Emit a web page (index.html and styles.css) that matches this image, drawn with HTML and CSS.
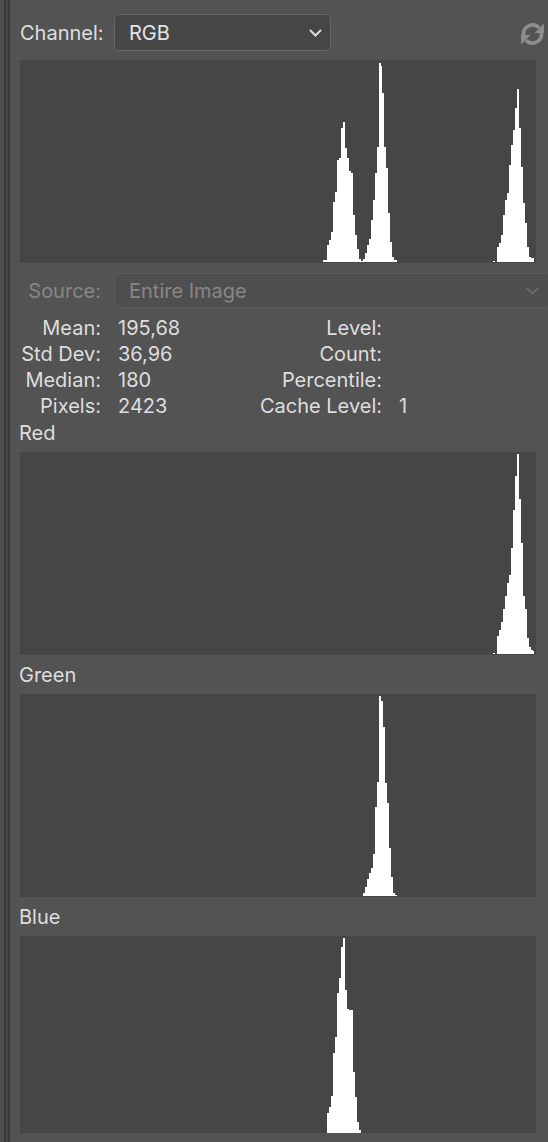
FILE: index.html
```html
<!DOCTYPE html>
<html lang="en">
<head>
<meta charset="utf-8">
<title>Histogram</title>
<link rel="stylesheet" href="styles.css">
</head>
<body>
<div class="panel">
  <div class="edge"></div>
  <main class="content">
    <div class="row channel-row">
      <span class="label">Channel:</span>
      <div class="select">
        <span>RGB</span>
        <svg class="chev" width="13" height="8" viewBox="0 0 13 8"><polyline points="1,1 6.5,6.5 12,1" fill="none" stroke="#dcdcdc" stroke-width="2"/></svg>
      </div>
      <svg class="refresh" width="25" height="24" viewBox="0 0 25 24">
        <path d="M3.6 13.2 A9 9 0 0 1 19 5.8" fill="none" stroke="#8d8d8d" stroke-width="3.6"/>
        <polygon points="24,1.5 24,11 14.5,11" fill="#8d8d8d"/>
        <path d="M21.4 10.8 A9 9 0 0 1 6 18.2" fill="none" stroke="#8d8d8d" stroke-width="3.6"/>
        <polygon points="1,22.5 1,13 10.5,13" fill="#8d8d8d"/>
      </svg>
    </div>

    <div class="hist">
      <svg width="516" height="203" viewBox="20 60 516 203" shape-rendering="crispEdges">
        <polygon fill="#fff" points="322.7,261.7 322.7,260 326.7,260 326.7,245 328.7,245 328.7,240 330.7,240 330.7,232 333.3,232 333.3,202 334.7,202 334.7,192 336.7,192 336.7,160 338.7,160 338.7,158 340.7,158 340.7,128 342.7,128 342.7,122 344.7,122 344.7,148 346.7,148 346.7,158 348.7,158 348.7,171 350.7,171 350.7,173 352.7,173 352.7,215 354.7,215 354.7,235 356.7,235 356.7,249 358.7,249 358.7,259 360.7,259 360.7,261 362.7,261 362.7,259 364.7,259 364.7,253 366.7,253 366.7,245 368.7,245 368.7,239 370.7,239 370.7,220 372.7,220 372.7,200 374.7,200 374.7,173 376.7,173 376.7,147 378.7,147 378.7,63 380.7,63 380.7,66 382,66 382,93 384,93 384,147 386,147 386,168 388,168 388,213 390,213 390,242 392,242 392,257 394,257 394,260 396.7,260 396.7,261.7"/>
        <rect x="492.7" y="260.5" width="2.3" height="1.2" fill="#fff"/>
        <polygon fill="#fff" points="496.7,261.7 496.7,247 498.7,247 498.7,243 500.7,243 500.7,235 502.7,235 502.7,215 504.7,215 504.7,200 506.7,200 506.7,193 508.7,193 508.7,165 510.7,165 510.7,145 512.7,145 512.7,130 514.7,130 514.7,108 516.7,108 516.7,89 518.7,89 518.7,128 520.7,128 520.7,167 522.7,167 522.7,203 524.7,203 524.7,223 526.7,223 526.7,247 528.7,247 528.7,257 530.7,257 530.7,258 534,258 534,261.7"/>
      </svg>
    </div>

    <div class="row source-row">
      <span class="label disabled">Source:</span>
      <div class="select select-disabled">
        <span>Entire Image</span>
        <svg class="chev" width="13" height="8" viewBox="0 0 13 8"><polyline points="1,1 6.5,6.5 12,1" fill="none" stroke="#6e6e6e" stroke-width="1.6"/></svg>
      </div>
    </div>

    <div class="stats">
      <span class="k">Mean:</span><span class="v">195,68</span><span class="k">Level:</span><span class="v"></span>
      <span class="k">Std Dev:</span><span class="v">36,96</span><span class="k">Count:</span><span class="v"></span>
      <span class="k">Median:</span><span class="v">180</span><span class="k">Percentile:</span><span class="v"></span>
      <span class="k">Pixels:</span><span class="v">2423</span><span class="k">Cache Level:</span><span class="v">1</span>
    </div>

    <section class="channel channel-first">
      <div class="channel-label">Red</div>
      <div class="hist">
        <svg width="516" height="203" viewBox="20 452 516 203" shape-rendering="crispEdges">
          <rect x="492.7" y="652.5" width="2.3" height="1.2" fill="#fff"/>
          <polygon fill="#fff" points="496.7,653.7 496.7,636 498.7,636 498.7,630 500.7,630 500.7,622 502.7,622 502.7,609 504.7,609 504.7,596 506.7,596 506.7,583 508.7,583 508.7,575 510.7,575 510.7,548 512.7,548 512.7,510 514.7,510 514.7,476 516.7,476 516.7,454 518.7,454 518.7,499 520.7,499 520.7,543 522.7,543 522.7,596 524.7,596 524.7,609 526.7,609 526.7,638 528.7,638 528.7,647 530.7,647 530.7,650 532.7,650 532.7,651 534,651 534,653.7"/>
        </svg>
      </div>
    </section>

    <section class="channel">
      <div class="channel-label">Green</div>
      <div class="hist">
        <svg width="516" height="203" viewBox="20 694 516 203" shape-rendering="crispEdges">
          <polygon fill="#fff" points="362.7,896 362.7,893 364.7,893 364.7,887 366.7,887 366.7,879 368.7,879 368.7,873 370.7,873 370.7,868 372.7,868 372.7,854 374.7,854 374.7,807 376.7,807 376.7,782 378.7,782 378.7,696 380.7,696 380.7,701 382.7,701 382.7,727 384.7,727 384.7,783 386.7,783 386.7,803 388.7,803 388.7,848 390.7,848 390.7,877 392.7,877 392.7,893 394.7,893 394.7,895 396.7,895 396.7,896"/>
        </svg>
      </div>
    </section>

    <section class="channel">
      <div class="channel-label">Blue</div>
      <div class="hist hist-cut">
        <svg width="516" height="197" viewBox="20 936 516 197" shape-rendering="crispEdges">
          <polygon fill="#fff" points="326.7,1133.3 326.7,1113 328.7,1113 328.7,1107 330.7,1107 330.7,1096 332.7,1096 332.7,1053 334.7,1053 334.7,1037 336.7,1037 336.7,993 338.7,993 338.7,978 340.7,978 340.7,947 342.7,947 342.7,937.5 344.7,937.5 344.7,990 346.7,990 346.7,1009 348.7,1009 348.7,1010 352.7,1010 352.7,1072 354.7,1072 354.7,1097 356.7,1097 356.7,1122 358.7,1122 358.7,1130 360.7,1130 360.7,1133.3"/>
        </svg>
      </div>
    </section>
  </main>
</div>
</body>
</html>
```

FILE: styles.css
```css
html, body {
  margin: 0;
  padding: 0;
}

body {
  width: 548px;
  height: 1142px;
  overflow: hidden;
  background: #535353;
  font-family: "Inter", "Noto Sans", "Liberation Sans", sans-serif;
  font-size: 20px;
  color: #dedede;
}

.panel {
  display: flex;
  height: 1142px;
}

.edge {
  flex: none;
  width: 10px;
  background: linear-gradient(to right,
    #4e4e4e 0, #4e4e4e 4px,
    #3a3a3a 4px, #3a3a3a 6px,
    #484848 6px, #484848 8px,
    #3b3b3b 8px, #3b3b3b 10px);
}

.content {
  flex: none;
  width: 516px;
  padding: 14px 12px 0 10px;
  display: flex;
  flex-direction: column;
}

.row {
  display: flex;
  align-items: center;
  gap: 13px;
}

.label {
  flex: none;
  width: 81px;
  text-align: right;
  white-space: nowrap;
}

.disabled {
  color: #868686;
}

.channel-row {
  height: 37px;
}

.select {
  box-sizing: border-box;
  flex: none;
  display: flex;
  align-items: center;
  justify-content: space-between;
  width: 217px;
  height: 37px;
  padding: 0 8px 0 14px;
  background: #464646;
  border: 1.5px solid #666666;
  border-radius: 5px;
  color: #e4e4e4;
}

.chev {
  flex: none;
  margin-top: 1px;
}

.refresh {
  flex: none;
  margin-left: auto;
  margin-right: -9px;
  margin-top: 2px;
}

.hist {
  width: 516px;
  height: 203px;
  background: #464646;
}

.hist svg {
  display: block;
}

.hist-cut {
  height: 197px;
}

.channel-row + .hist {
  margin-top: 9px;
}

.source-row {
  margin-top: 10px;
  height: 35px;
}

.select-disabled {
  width: 436px;
  height: 35px;
  padding-right: 10px;
  background: #4f4f4f;
  border-color: #5c5c5c;
  color: #868686;
}

.stats {
  display: grid;
  grid-template-columns: 81px 100px 147px auto;
  column-gap: 17px;
  margin-top: 7px;
  line-height: 26px;
}

.stats .k {
  text-align: right;
  white-space: nowrap;
}

.stats .v {
  white-space: nowrap;
}

.channel-label {
  line-height: 26px;
  margin: 7px 0 6px -1px;
}

.channel-first .channel-label {
  margin-top: 1px;
}
```
